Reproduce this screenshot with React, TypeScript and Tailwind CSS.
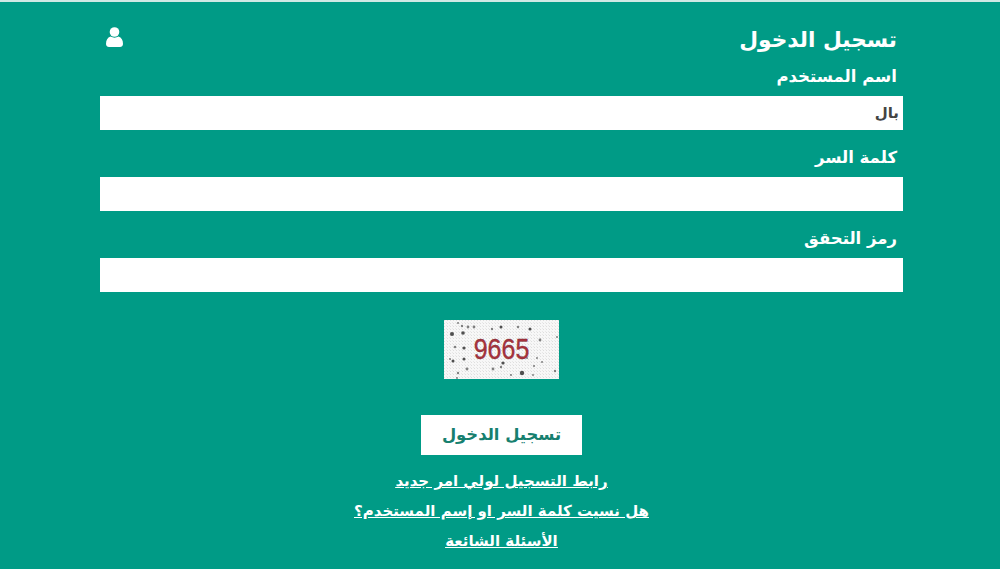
const dots = [
  [8, 14, 2], [19, 13, 1.8], [14, 3, 1], [18, 6, 1.2], [24, 7, 1.4], [30, 7, 1.4], [48, 9, 1.2], [57, 7, 1.5],
  [74, 7, 1.2], [86, 9, 1.5], [11, 27, 1.3], [23, 49, 1.4], [14, 53, 1.2], [13, 58, 1], [49, 49, 1.4],
  [59, 43, 1.6], [57, 47, 1.2], [78, 53, 2.2], [67, 55, 1.1], [90, 46, 1.1], [98, 42, 1], [111, 51, 1.2],
  [113, 17, 1], [93, 38, 1], [89, 55, 1], [83, 38, 1], [9, 41, 1.5], [6, 39, 1], [20, 28, 1.6], [20, 39, 1.5], [96, 20, 1.4],
];

function Captcha() {
  return (
    <div className="relative h-[59px] w-[115px] overflow-hidden bg-[#f7f7f7]">
      <svg viewBox="0 0 115 59" className="absolute inset-0 h-full w-full">
        <defs>
          <pattern id="noise" width="3" height="3" patternUnits="userSpaceOnUse">
            <rect width="1" height="1" fill="#dedede" />
            <rect x="2" y="2" width="1" height="1" fill="#e8e8e8" />
          </pattern>
        </defs>
        <rect width="115" height="59" fill="url(#noise)" />
        {dots.map(([x, y, r], i) => (
          <circle key={i} cx={x} cy={y} r={r} fill="#333" opacity={r > 1.4 ? 0.85 : 0.6} />
        ))}
      </svg>
      <span className="absolute inset-0 flex scale-y-[1.15] items-center justify-center pb-[1px] font-['Liberation_Sans',sans-serif] text-[25px] leading-none text-[#a8323c] [-webkit-text-stroke:0.3px_#7a2a33]">
        9665
      </span>
    </div>
  );
}

function UserIcon() {
  return (
    <svg viewBox="0 0 17 20" className="mt-[3px] ml-[6px] h-[20px] w-[17px] fill-white">
      <circle cx="8.5" cy="5" r="4.8" />
      <path d="M0 17c0-4 1.5-6.5 4.5-7.5 2.5 1.5 5.500 1.500 8 0 3 1 4.500 3.500 4.500 7.500 0 2-1.500 3-3 3H3c-1.500 0-3-1-3-3z" />
    </svg>
  );
}

function Field({ label, value }: { label: string; value?: string }) {
  return (
    <div className="flex flex-col">
      <label className="mb-[8px] pr-[6px] text-[16.5px] leading-[22px] font-bold text-white">{label}</label>
      <div className="flex h-[34px] items-center bg-white pr-[4px] text-[15px] font-bold text-[#444]">{value}</div>
    </div>
  );
}

export default function App() {
  return (
    <div
      dir="rtl"
      className="h-[569px] w-[1000px] overflow-hidden border-t-2 border-[#cfe9e4] bg-[#009b86] font-['DejaVu_Sans',sans-serif]"
    >
      <div className="mr-[97px] w-[803px]">
        <div className="flex items-start justify-between pt-[22px] pr-[6px]">
          <h1 className="text-[21.7px] leading-[32px] font-bold text-white">تسجيل الدخول</h1>
          <UserIcon />
        </div>
        <div className="mt-[10px] flex flex-col gap-[17px]">
          <Field label="اسم المستخدم" value="بال" />
          <Field label="كلمة السر" />
          <Field label="رمز التحقق" />
        </div>
      </div>
      <div className="mt-[28px] flex flex-col items-center pl-[3px]">
        <Captcha />
        <button className="mt-[36px] h-[40px] w-[161px] bg-white text-[16.4px] font-bold text-[#17806f]">
          تسجيل الدخول
        </button>
        <div className="mt-[15px] flex flex-col items-center gap-[8px] text-[15px] leading-[22px] font-bold text-white underline">
          <a>رابط التسجيل لولي امر جديد</a>
          <a>هل نسيت كلمة السر او إسم المستخدم؟</a>
          <a>الأسئلة الشائعة</a>
        </div>
      </div>
    </div>
  );
}
